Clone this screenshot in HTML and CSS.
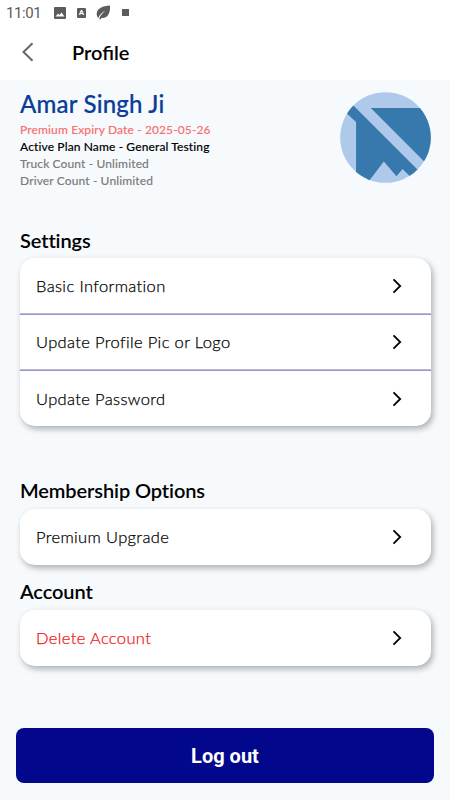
FILE: index.html
```
<!DOCTYPE html>
<html lang="en">
<head>
    <meta charset="UTF-8">
    <meta name="viewport" content="width=device-width, initial-scale=1.0">
    <title>Profile</title>
    <link rel="stylesheet" href="styles.css">
</head>
<body>
    <div class="status-bar">
        <span class="time">11:01</span>
        <svg class="status-icon image-icon" width="12" height="12" viewBox="0 0 12 12">
            <path fill-rule="evenodd" d="M1 0h10a1 1 0 0 1 1 1v10a1 1 0 0 1-1 1H1a1 1 0 0 1-1-1V1a1 1 0 0 1 1-1zM1.5 9.500h9L7.500 5.500 5.500 8 4 6.500z"/>
        </svg>
        <span class="letter-icon">A</span>
        <svg class="status-icon leaf-icon" width="15" height="15" viewBox="0 0 15 15">
            <path d="M14 .5C7 .8.7 3.300.7 9c0 1.700.7 3 1.500 3.900C3.700 9.700 6 7.300 9.400 5.500 6.500 8 4.200 10.500 3.200 14l1.500.4.6-1.400C11.500 14 14.500 8 14 .5z"/>
        </svg>
        <span class="dot-icon"></span>
    </div>
    <header class="app-bar">
        <svg class="back" width="14" height="20" viewBox="0 0 14 20">
            <path d="M11.500 1.200 2.500 10l9 8.800"/>
        </svg>
        <h1>Profile</h1>
    </header>

    <main class="container">
        <section class="user">
            <div class="user-info">
                <h2 class="user-name">Amar Singh Ji</h2>
                <p class="expiry">Premium Expiry Date - 2025-05-26</p>
                <p class="plan">Active Plan Name - General Testing</p>
                <p>Truck Count - Unlimited</p>
                <p>Driver Count - Unlimited</p>
            </div>
            <svg class="avatar" width="91" height="91" viewBox="30 21 272 272">
                <clipPath id="avatarClip"><circle cx="166" cy="157" r="135.500"/></clipPath>
                <g clip-path="url(#avatarClip)">
                    <rect class="avatar-light" x="30" y="21" width="272" height="272"/>
                    <path class="avatar-dark" d="M48 83 78 111V293H112L161 229 199 273 217 251 245 279 263 254 67 58z"/>
                    <path class="avatar-dark" d="M122 69H302V250L281 228z"/>
                </g>
            </svg>
        </section>

        <h3>Settings</h3>
        <div class="card settings">
            <a class="row">Basic Information
                <svg class="chevron" width="10" height="16" viewBox="0 0 10 16"><path d="M1.500 1.300 8.200 8l-6.700 6.700"/></svg>
            </a>
            <a class="row">Update Profile Pic or Logo
                <svg class="chevron" width="10" height="16" viewBox="0 0 10 16"><path d="M1.500 1.300 8.200 8l-6.700 6.700"/></svg>
            </a>
            <a class="row">Update Password
                <svg class="chevron" width="10" height="16" viewBox="0 0 10 16"><path d="M1.500 1.300 8.200 8l-6.700 6.700"/></svg>
            </a>
        </div>

        <h3>Membership Options</h3>
        <div class="card membership">
            <a class="row">Premium Upgrade
                <svg class="chevron" width="10" height="16" viewBox="0 0 10 16"><path d="M1.500 1.300 8.200 8l-6.700 6.700"/></svg>
            </a>
        </div>

        <h3>Account</h3>
        <div class="card account">
            <a class="row danger">Delete Account
                <svg class="chevron" width="10" height="16" viewBox="0 0 10 16"><path d="M1.500 1.300 8.200 8l-6.700 6.700"/></svg>
            </a>
        </div>
    </main>

    <button class="logout">Log out</button>
</body>
</html>
```
FILE: styles.css
```
* {
    box-sizing: border-box;
}
body {
    margin: 0;
    height: 800px;
    font-family: Lato, sans-serif;
    background-color: #f6fafd;
    color: #000;
    display: flex;
    flex-direction: column;
}
h1, h2, h3, p {
    margin: 0;
}
.status-bar {
    height: 25px;
    padding-left: 6px;
    display: flex;
    align-items: center;
    background-color: #fff;
    color: #5c5c5c;
}
.time {
    width: 48px;
    font: 15px/24px Roboto, sans-serif;
    letter-spacing: -0.4px;
}
.status-icon {
    fill: #5c5c5c;
}
.letter-icon {
    width: 9px;
    height: 10px;
    margin-left: 11px;
    border-radius: 1px;
    background-color: #5c5c5c;
    color: #fff;
    font: bold 8px/10px Roboto, sans-serif;
    text-align: center;
}
.leaf-icon {
    margin-left: 10px;
}
.dot-icon {
    width: 7px;
    height: 7px;
    margin-left: 11px;
    background-color: #5c5c5c;
}
.app-bar {
    height: 55px;
    padding: 0 0 2px 21px;
    display: flex;
    align-items: center;
    background-color: #fff;
}
.back {
    fill: none;
    stroke: #666;
    stroke-width: 2;
}
.app-bar h1 {
    margin-left: 37px;
    font-size: 20px;
    font-weight: 600;
    line-height: 24px;
}
.container {
    padding: 8px 19px 0 20px;
    flex: 1;
}
.user {
    height: 140px;
    display: flex;
    justify-content: space-between;
}
.user-info p {
    font-size: 12px;
    font-weight: 500;
    line-height: 17px;
    letter-spacing: 0.12px;
    color: #7c7c7c;
    -webkit-text-stroke: 0.1px;
}
.user-info .user-name {
    height: 33px;
    font-size: 24px;
    font-weight: 500;
    line-height: 31px;
    letter-spacing: 0.2px;
    color: #0b3c98;
    -webkit-text-stroke: 0.2px;
}
.user-info .expiry {
    color: #f97070;
}
.user-info .plan {
    color: #000;
}
.avatar {
    margin-top: 4px;
}
.avatar-light {
    fill: #afc9ea;
}
.avatar-dark {
    fill: #3779ac;
}
h3 {
    font-size: 20px;
    font-weight: 600;
    line-height: 24px;
    letter-spacing: -0.1px;
    font-variant-ligatures: none;
}
.card {
    margin-top: 7px;
    border-radius: 15px;
    background-color: #fff;
    box-shadow: 2px 3px 6px rgba(0, 0, 0, 0.3);
}
.settings {
    margin-top: 6px;
    margin-bottom: 52px;
}
.membership {
    margin-bottom: 14px;
}
.row {
    height: 56px;
    padding: 0 29px 0 16px;
    display: flex;
    align-items: center;
    justify-content: space-between;
    font-size: 16.5px;
    font-weight: 300;
    letter-spacing: 0.36px;
    -webkit-text-stroke: 0.25px;
}
.settings .row:not(:last-child) {
    border-bottom: 1px solid #b9b9d2;
}
.row + .row {
    border-top: 1px solid #9898cc;
}
.chevron {
    fill: none;
    stroke: #000;
    stroke-width: 1.8;
}
.danger {
    color: #f01414;
}
.logout {
    height: 55px;
    margin: 0 16px 17px;
    border: none;
    border-radius: 8px;
    background-color: #02078b;
    color: #fff;
    font: bold 20px Roboto, sans-serif;
}
```
